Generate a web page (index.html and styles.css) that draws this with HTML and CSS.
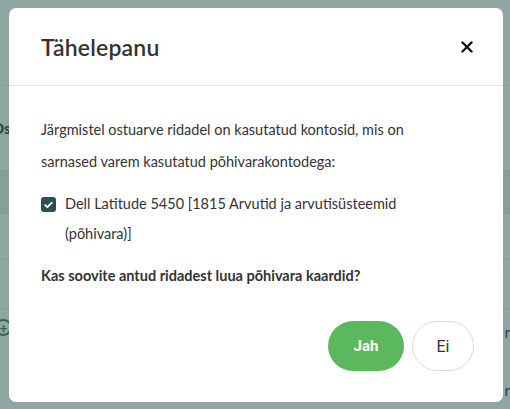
FILE: index.html
```html
<!DOCTYPE html>
<html lang="et">
<head>
<meta charset="utf-8">
<link rel="stylesheet" href="styles.css">
</head>
<body>
<div class="page">
  <div class="page-head"></div>
  <div class="page-row r1"><span class="frag">Os</span></div>
  <div class="page-row r2"></div>
  <div class="page-row r3"></div>
  <div class="page-row r4"></div>
  <div class="page-row r5"><span class="plus">+</span><span class="frag-r">r</span></div>
  <div class="page-row r6"><span class="frag-r">r</span></div>
</div>
<div class="overlay"></div>
<div class="modal">
  <div class="modal-header">
    <h1 class="title">Tähelepanu</h1>
    <svg class="close" width="12" height="12" viewBox="0 0 12 12"><path d="M1.5 1.5 L10.5 10.5 M10.5 1.5 L1.5 10.5" stroke="#111" stroke-width="2.4" stroke-linecap="round"/></svg>
  </div>
  <div class="modal-body">
    <p class="intro">Järgmistel ostuarve ridadel on kasutatud kontosid, mis on sarnased varem kasutatud põhivarakontodega:</p>
    <div class="check-row">
      <span class="checkbox"><svg width="9" height="8" viewBox="0 0 9 8"><path d="M1.2 4.2 L3.4 6.2 L7.8 1.6" stroke="#fff" stroke-width="1.8" fill="none" stroke-linecap="round" stroke-linejoin="round"/></svg></span>
      <span class="check-label">Dell Latitude 5450 [1815 Arvutid ja arvutisüsteemid (põhivara)]</span>
    </div>
    <p class="question">Kas soovite antud ridadest luua põhivara kaardid?</p>
  </div>
  <div class="modal-footer">
    <button class="btn btn-yes">Jah</button>
    <button class="btn btn-no">Ei</button>
  </div>
</div>
</body>
</html>
```
FILE: styles.css
```css
html, body {
  margin: 0;
  padding: 0;
}
body {
  width: 510px;
  height: 409px;
  overflow: hidden;
  position: relative;
  font-family: "Source Sans Pro", "Lato", "Noto Sans", sans-serif;
  background: #ffffff;
}
.page {
  display: flex;
  flex-direction: column;
  height: 409px;
}
.page-head {
  height: 85px;
  background: #ffffff;
  border-bottom: 1px solid #f1f3f3;
}
.page-row {
  position: relative;
  background: #ffffff;
  border-bottom: 1px solid #e9ecec;
}
.r1 { height: 84px; }
.r2 { height: 42px; background: #eef0f0; }
.r3 { height: 45px; }
.r4 { height: 48px; }
.r5 { height: 60px; border-bottom: none; }
.r6 { flex: 1; border-bottom: none; }
.frag {
  position: absolute;
  left: -8px;
  top: 33px;
  font-size: 15px;
  font-weight: 700;
  color: #333;
}
.frag-r {
  position: absolute;
  right: 0px;
  top: 14px;
  font-size: 15px;
  color: #333;
}
.r6 .frag-r { top: 12px; }
.plus {
  position: absolute;
  left: -5px;
  top: 10px;
  width: 13px;
  height: 13px;
  border: 2px solid #2e8b3c;
  border-radius: 50%;
  font-size: 14px;
  line-height: 13px;
  text-align: center;
  color: #2e8b3c;
  font-weight: 700;
}
.overlay {
  position: absolute;
  inset: 0;
  background: rgba(35, 75, 70, 0.5);
}
.modal {
  position: absolute;
  left: 9px;
  top: 8px;
  width: 494px;
  height: 394px;
  background: #fff;
  border-radius: 7px;
  display: flex;
  flex-direction: column;
  color: #333;
}
.modal-header {
  height: 78px;
  box-sizing: border-box;
  padding: 0 30px 0 32px;
  display: flex;
  align-items: center;
  justify-content: space-between;
  border-bottom: 1px solid #e4e4ea;
}
.title {
  margin: 0;
  font-size: 23px;
  font-weight: 600;
  color: #333;
  letter-spacing: 0.2px;
}
.modal-body {
  padding: 28px 80px 0 32px;
  font-size: 14.5px;
}
.intro {
  margin: 0;
  line-height: 32px;
}
.check-row {
  display: flex;
  align-items: flex-start;
  margin-top: 11px;
  line-height: 30px;
}
.checkbox {
  flex: none;
  width: 15px;
  height: 15px;
  margin-top: 8px;
  margin-right: 9px;
  background: #2b4f53;
  border-radius: 3px;
  display: flex;
  align-items: center;
  justify-content: center;
}
.question {
  margin: 12px 0 0;
  font-weight: 700;
  line-height: 30px;
}
.modal-footer {
  margin-top: auto;
  padding: 0 29px 31px 0;
  display: flex;
  justify-content: flex-end;
  gap: 8px;
}
.btn {
  height: 50px;
  border-radius: 25px;
  font-family: "Roboto", "Liberation Sans", sans-serif;
  cursor: pointer;
}
.btn-yes {
  width: 76px;
  background: #5cb85c;
  border: none;
  color: #fff;
  font-weight: 700;
  font-size: 15px;
}
.btn-no {
  width: 62px;
  background: #fff;
  border: 1px solid #dcdcdc;
  color: #333;
  font-size: 16px;
}
```
